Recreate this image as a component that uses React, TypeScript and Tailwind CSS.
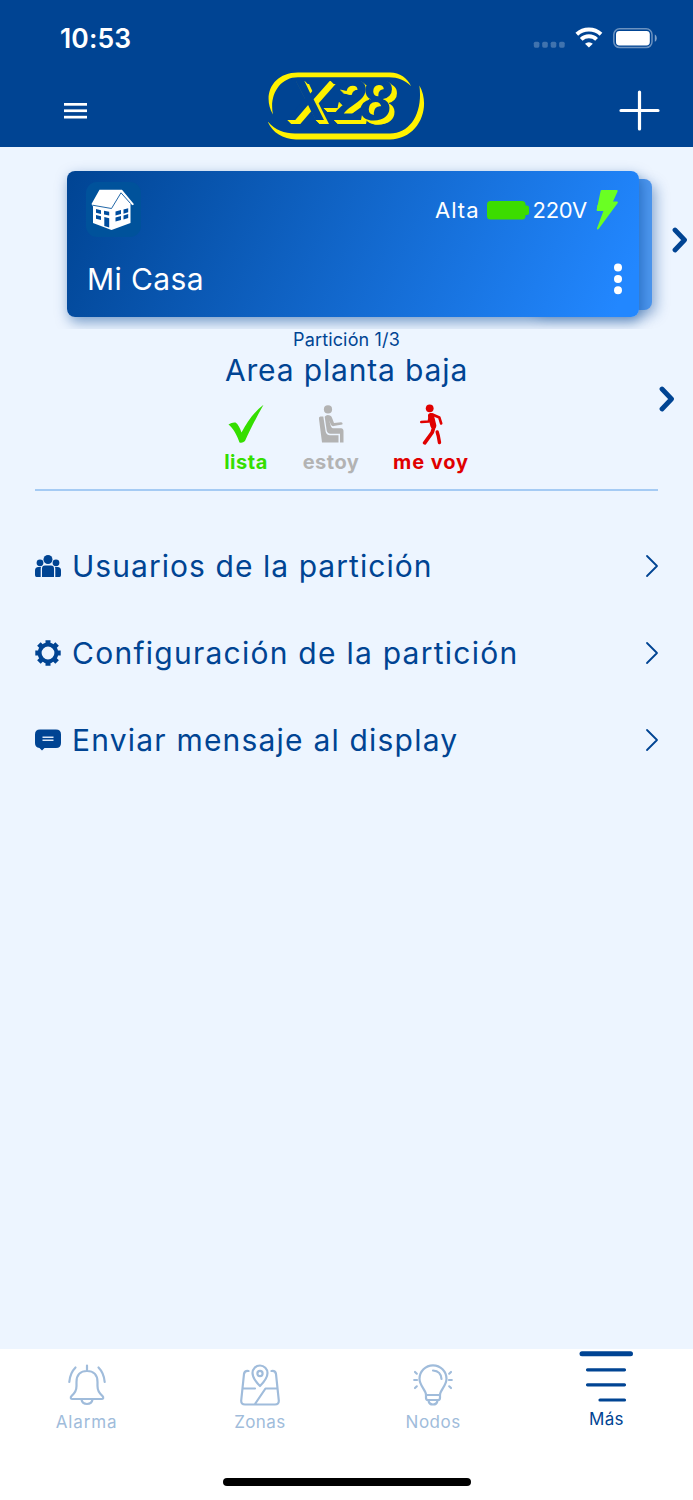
import React from "react";

interface MenuRowProps {
  icon: React.ReactNode;
  label: string;
  labelClass: string;
}

interface TabProps {
  icon: React.ReactNode;
  label: string;
  labelClass: string;
}

const StatusBar: React.FC = () => (
  <div className="flex h-[75px] items-center justify-between pl-[60px] pr-[36px] text-white">
    <span className="text-[26.5px] leading-8 font-semibold tracking-[0.1px]">10:53</span>
    <svg width="124" height="24" viewBox="0 0 124 24" fill="none">
      <g fill="#fff" fillOpacity="0.25">
        <rect x="0.8" y="15.7" width="5.6" height="6" rx="1.6" />
        <rect x="9.2" y="15.7" width="5.6" height="6" rx="1.6" />
        <rect x="17.7" y="15.7" width="5.6" height="6" rx="1.6" />
        <rect x="26.1" y="15.7" width="5.6" height="6" rx="1.6" />
      </g>
      <g stroke="#fff" strokeWidth="4">
        <path d="M43.8 8.2a18 18 0 0 1 24.2 0" />
        <path d="M48.2 13.4a11.3 11.3 0 0 1 15.4 0" />
      </g>
      <path d="M55.9 21.6l-3.9-3.9a5.8 5.8 0 0 1 7.8 0z" fill="#fff" />
      <rect x="80.8" y="2.8" width="38.2" height="18.8" rx="5.8" stroke="#fff" strokeOpacity="0.42" strokeWidth="1.5" />
      <rect x="83" y="5" width="33.8" height="14.4" rx="3.4" fill="#fff" />
      <path d="M121.8 8.6c2.6 1.2 2.6 6 0 7.2z" fill="#fff" fillOpacity="0.5" />
    </svg>
  </div>
);

const Logo: React.FC = () => (
  <div className="relative h-[68px] w-[158px]">
    <svg className="absolute inset-0" width="158" height="68" viewBox="0 0 158 68" fill="#fff200">
      <path d="M5 42.5C-6 24 4 .6 30 .6H122C132 .6 139 6 143 14C137 8 130 5.200 121 5.200H30C11 5.200 1 24 5 42.500Z" />
      <path d="M-.6 49C7 58 16 61.400 27 61.400H122C143 61.400 155 40 151.400 13.500C164 36 150 67.400 122 67.400H28C14 67.400 4 60 -.6 49Z" />
    </svg>
    <span className="absolute top-[-3px] left-[21px] font-['Liberation_Sans'] text-[58px] leading-[62px] font-bold italic tracking-[-6.5px] text-[#004493] [text-shadow:1px_1px_0_#fff200,2px_2px_0_#fff200,3px_3px_0_#fff200,4px_4px_0_#fff200,5px_4px_0_#fff200]">
      X-28
    </span>
  </div>
);

const Header: React.FC = () => (
  <header className="h-[147px] bg-[#004493]">
    <StatusBar />
    <div className="flex h-[72px] items-start justify-between pl-[64px] pr-[33px]">
      <svg className="mt-[28px]" width="23" height="16" fill="#fff">
        <rect width="23" height="2.7" />
        <rect y="6.4" width="23" height="2.7" />
        <rect y="12.8" width="23" height="2.7" />
      </svg>
      <div className="-mt-[3px] -ml-[12px]">
        <Logo />
      </div>
      <svg className="mt-[15px]" width="41" height="41" stroke="#fff" strokeWidth="3.2" strokeLinecap="round">
        <path d="M20.5 2v37M2 20.5h37" />
      </svg>
    </div>
  </header>
);

const BoldChevron: React.FC = () => (
  <svg width="16" height="26" fill="none" stroke="#004493" strokeWidth="4.8" strokeLinecap="round" strokeLinejoin="round">
    <path d="M3 3l9.5 10L3 23" />
  </svg>
);

const HouseIcon: React.FC = () => (
  <div className="-ml-px flex h-[55px] w-[55px] items-center rounded-[11px] bg-[#00529b] pl-[5px]">
    <svg width="44" height="42" viewBox="0 0 44 42">
      <path d="M8.5.8H31L43 15.2L41.5 16.2L39.5 14.5V34L20.5 41L2 34V17.500L.5 15Z" fill="#fff" />
      <path d="M1.500 16.2L20.500 19.500L30 3.800L39.500 14.5" fill="none" stroke="#09569d" strokeWidth="0.9" />
      <g fill="#004d9d">
        <path d="M5 20l5 1.200v3.700L5 23.700zM5 26l5 1.200v3.700L5 29.700zM13 21.800l5.200 1v3.800l-5.200-1zM13.300 28l4.900 1.200V38.500l-4.900-1.600z" />
        <path d="M24.500 22.500l5.500-1.500v4l-5.500 1.400zM32.500 20.600l4.700-1.400v4l-4.700 1.500zM24.500 28.500l5.500-1.500v4l-5.500 1.600zM32.500 26.500l4.700-1.500v4l-4.700 1.600z" />
      </g>
    </svg>
  </div>
);

const AlarmCard: React.FC = () => (
  <div className="relative h-[146px] w-[572px]">
    <div className="absolute top-2 -right-[13px] h-[131px] w-[120px] rounded-[8px] bg-[#4c96ee] shadow-[4px_5px_14px_rgba(0,68,147,0.4)]" />
    <div className="relative flex h-full justify-between rounded-[8px] bg-linear-[115deg,#004493_0%,#2287ff_96%] pt-[11px] pr-[15px] pl-[20px] text-white shadow-[2px_5px_13px_rgba(0,68,147,0.5)]">
      <div>
        <HouseIcon />
        <h2 className="mt-[22px] text-[30px] leading-[40px] font-normal tracking-[0.4px]">Mi Casa</h2>
      </div>
      <div className="flex flex-col items-end">
        <div className="mt-[6px] flex h-[44px] items-center">
          <span className="text-[22px] tracking-[1px]">Alta</span>
          <svg className="mr-1 ml-[7px]" width="42" height="20" fill="#3cdc00">
            <rect y="1" width="38.5" height="18.5" rx="3.5" />
            <rect x="33" y="5.5" width="9" height="9.5" rx="2" />
          </svg>
          <span className="text-[22px] tracking-[-0.3px]">220V</span>
          <svg className="ml-[9px] mr-[5px]" width="23" height="42" viewBox="0 0 23 42" fill="#6aff23">
            <path d="M5.5 1H20.700Q22.200 1 21.600 2.500L17 12.500H21Q22.500 12.500 21.700 14L3 39.600Q1.200 41.500.9 39.500L7.400 22H1.800Q.5 22 .8 20.500L4.600 2Q4.800 1 5.500 1Z" />
            <path d="M.8 20.5L1.500 16H8V22H1.800Q.5 22 .8 20.5Z" />
          </svg>
        </div>
        <svg className="mt-[31px] mr-[2px]" width="8" height="32" fill="#fff">
          <circle cx="4" cy="4.5" r="4" />
          <circle cx="4" cy="15.9" r="4" />
          <circle cx="4" cy="27.3" r="4" />
        </svg>
      </div>
    </div>
  </div>
);

const CheckIcon: React.FC = () => (
  <svg width="36" height="40" viewBox="0 0 36 40" fill="#35de00">
    <path d="M35.5.8C28 14 22 26 17 37Q14.5 39.5 11.5 38.5C9 31 5 24 .5 20.5Q4 18 7.5 18.5C10 20 12 24 13.5 28.5C19 18 26 8 35.5.8Z" />
  </svg>
);

const SeatedIcon: React.FC = () => (
  <svg width="26" height="40" viewBox="0 0 26 40" fill="#b3b3b3">
    <circle cx="10" cy="5.4" r="4.1" />
    <path d="M2.3 12.500Q.6 12.700 1 15L4 38.500H20.500V31.300H12Q8.300 31 7.600 27.500L5.300 12.500Z" />
    <path d="M6.700 12.700Q8.500 10.200 12 11.500Q13.700 12.200 14.200 14.200L16 19L23 18.200Q25.200 18.500 24.300 20.500L15.700 22.100Q13.600 22.400 12.800 20.200L10.800 16L12.300 20Q13 23.900 15 24.300L23 24.300Q25.700 24.500 25.500 27.500V38.500H22V29.800H12.500Q9.300 29.500 8.700 26.500Z" />
  </svg>
);

const WalkIcon: React.FC = () => (
  <svg width="24" height="41" viewBox="0 0 24 41" fill="none" stroke="#e00000" strokeLinecap="round" strokeLinejoin="round">
    <circle cx="10.700" cy="4.3" r="3.9" fill="#e00000" stroke="none" />
    <path d="M12 12L14.300 21.500" strokeWidth="6" />
    <path d="M11 12L9.800 17.500L2.300 18" strokeWidth="2.7" />
    <path d="M13.500 10.500L20.300 13.500L22.200 19.500" strokeWidth="2.6" />
    <path d="M15.200 22L13.200 28.500L5.700 38.800" strokeWidth="3.7" />
    <path d="M18.200 28L19.300 32L20.500 38.600" strokeWidth="3.4" />
  </svg>
);

const PartitionPanel: React.FC = () => (
  <section className="flex h-[162px] flex-col text-[#004493]">
    <p className="mt-px text-center text-[18px] leading-[20px] font-normal tracking-[0.15px]">Partición 1/3</p>
    <h1 className="text-center text-[30px] leading-[40px] font-normal tracking-[0.85px]">Area planta baja</h1>
    <div className="mx-[35px] flex h-[101px] border-b-2 border-[#a5cbf4] pt-[14px] text-[20px] leading-[26px] font-bold whitespace-nowrap">
      <div className="ml-[183px] flex w-[56px] flex-col items-center text-[#35de00]">
        <CheckIcon />
        <span className="mt-[5px] tracking-[0.5px]">lista</span>
      </div>
      <div className="ml-[23px] flex w-[68px] flex-col items-center text-[#b3b3b3]">
        <SeatedIcon />
        <span className="mt-[5px] tracking-[0.5px]">estoy</span>
      </div>
      <div className="ml-[26px] flex w-[80px] flex-col items-center text-[#e00000]">
        <WalkIcon />
        <span className="mt-[4px] tracking-[0.9px]">me voy</span>
      </div>
    </div>
  </section>
);

const UsersIcon: React.FC = () => (
  <svg width="26" height="24" viewBox="0 0 26 24" fill="#004493">
    <circle cx="13" cy="5.5" r="4.5" />
    <circle cx="5" cy="8.8" r="3.4" />
    <circle cx="21" cy="8.8" r="3.4" />
    <path d="M7 23V14.5Q7 11.5 10 11.5H16Q19 11.5 19 14.5V23ZM5.700 23H1.500Q0 23 0 21V16.5Q0 13 3.500 13H6Q5.700 14 5.700 15ZM20.300 23H24.5Q26 23 26 21V16.500Q26 13 22.500 13H20Q20.300 14 20.300 15Z" />
  </svg>
);

const GearIcon: React.FC = () => (
  <svg width="26" height="26" viewBox="0 0 26 26" fill="none" stroke="#004493">
    <circle cx="13" cy="13" r="8.4" strokeWidth="4" />
    <path d="M13 .3v4M13 21.7v4M.3 13h4M21.7 13h4M3.900 3.900l3 3M19.100 19.100l3 3M3.900 22.100l3-3M19.100 6.900l3-3" strokeWidth="5" />
  </svg>
);

const MessageIcon: React.FC = () => (
  <svg width="26" height="22" viewBox="0 0 26 22" fill="#004493">
    <path d="M5 .5H21Q26 .5 26 5.5V14Q26 19 21 19H9.5L7 21.500L4.500 19Q0 18.500 0 14V5.500Q0 .5 5 .5Z" />
    <path d="M7.5 8.300H18.500M7.500 11.300H18.500" stroke="#dce8f8" strokeWidth="1.4" />
  </svg>
);

const MenuRow: React.FC<MenuRowProps> = ({ icon, label, labelClass }) => (
  <li className="flex h-[87px] items-center">
    <span className="-ml-[0.5px] flex w-[37.5px]">{icon}</span>
    <span className={labelClass}>{label}</span>
    <svg className="mr-[-1px] ml-auto" width="14" height="24" fill="none" stroke="#004493" strokeWidth="1.8" strokeLinecap="round" strokeLinejoin="round">
      <path d="M2 2l10 10L2 22" />
    </svg>
  </li>
);

const BellIcon: React.FC = () => (
  <svg width="38" height="42" viewBox="0 0 38 42" fill="none" stroke="#a0bcdb" strokeWidth="2.2" strokeLinecap="round" strokeLinejoin="round">
    <path d="M19 1.500V7M8.500 18C8.500 11 12.500 7 19 7S29.500 11 29.500 18V22C29.500 27 31.500 29.500 34.300 31.800C36 33.500 35.200 35 33.500 35H4.500C2.800 35 2 33.500 3.700 31.800C6.500 29.500 8.500 27 8.500 22ZM13.500 35.500C14.500 41.500 23.500 41.500 24.500 35.500M7.500 3.500Q2 9 1.300 18M30.500 3.500Q36 9 36.700 18" />
  </svg>
);

const MapIcon: React.FC = () => (
  <svg width="40" height="42" viewBox="0 0 40 42" fill="none" stroke="#a0bcdb" strokeWidth="2.2" strokeLinecap="round" strokeLinejoin="round">
    <path d="M20 22C15.500 17.500 12.500 13 12.500 9A7.500 7.500 0 0 1 27.500 9C27.500 13 24.500 17.500 20 22Z" />
    <circle cx="20" cy="9.5" r="2.600" />
    <path d="M8.500 7Q4.500 6.500 4 10L1.200 36.500Q1 40.500 5 40.500H35Q39 40.500 38.800 36.500L36 10Q35.500 6.500 31.500 7M3 24.500H15M37 24.500H25.500L15 40" />
  </svg>
);

const BulbIcon: React.FC = () => (
  <svg width="40" height="42" viewBox="0 0 40 42" fill="none" stroke="#a0bcdb" strokeWidth="2.2" strokeLinecap="round" strokeLinejoin="round">
    <path d="M13 31C13 26 6.500 22 6.500 14.800A13.500 13.500 0 0 1 33.500 14.800C33.500 22 27 26 27 31V34Q27 36 25 36H15Q13 36 13 34ZM13 31H27M15.500 36.500Q16 40.500 20 40.500T24.500 36.500M20 6.500Q28 7 28.500 15M1.200 16H4M36 16H38.800M2 8L3.800 9.700M38 8L36.200 9.700M2 24L3.800 22.300M38 24L36.200 22.300" />
  </svg>
);

const Tab: React.FC<TabProps> = ({ icon, label, labelClass }) => (
  <div className="flex w-1/4 flex-col items-center pt-[15px]">
    {icon}
    <span className={labelClass}>{label}</span>
  </div>
);

const TabBar: React.FC = () => (
  <nav className="flex h-[151px] flex-col bg-white">
    <div className="flex h-[120px] text-[17px] leading-[22px] text-[#a0bcdb]">
      <Tab icon={<BellIcon />} label="Alarma" labelClass="mt-[5px] tracking-[0.9px]" />
      <Tab icon={<MapIcon />} label="Zonas" labelClass="mt-[5px] tracking-[0.4px]" />
      <Tab icon={<BulbIcon />} label="Nodos" labelClass="mt-[5px] tracking-[0.5px]" />
      <div className="flex w-1/4 flex-col items-center pt-[2px] text-[#004493]">
        <svg width="54" height="52" viewBox="0 0 54 52" stroke="#004493" strokeLinecap="round">
          <path d="M3 2.800H51.500" strokeWidth="5" />
          <path d="M8.500 18.800H45.500M8.500 33.800H45.500M21 49H45.500" strokeWidth="3.2" />
        </svg>
        <span className="mt-[5px] tracking-[0.3px]">Más</span>
      </div>
    </div>
    <div className="mt-[9px] h-[8px] w-[248px] self-center rounded-full bg-black" />
  </nav>
);

const App: React.FC = () => {
  return (
    <div className="flex h-[1500px] w-[693px] flex-col overflow-hidden bg-[#edf5ff] font-[Inter,sans-serif]">
      <Header />
      <section className="flex h-[182px] items-start overflow-hidden pt-[24px] pl-[67px]">
        <AlarmCard />
        <div className="mt-[56px] ml-[33px]">
          <BoldChevron />
        </div>
      </section>
      <div className="relative">
        <PartitionPanel />
        <div className="absolute top-[57px] right-[18px]">
          <BoldChevron />
        </div>
      </div>
      <ul className="mt-[31px] grow px-[35px] text-[30px] leading-[40px] font-normal whitespace-nowrap text-[#004493]">
        <MenuRow icon={<UsersIcon />} label="Usuarios de la partición" labelClass="tracking-[1.05px]" />
        <MenuRow icon={<GearIcon />} label="Configuración de la partición" labelClass="tracking-[1.25px]" />
        <MenuRow icon={<MessageIcon />} label="Enviar mensaje al display" labelClass="tracking-[1.2px]" />
      </ul>
      <TabBar />
    </div>
  );
};

export default App;
